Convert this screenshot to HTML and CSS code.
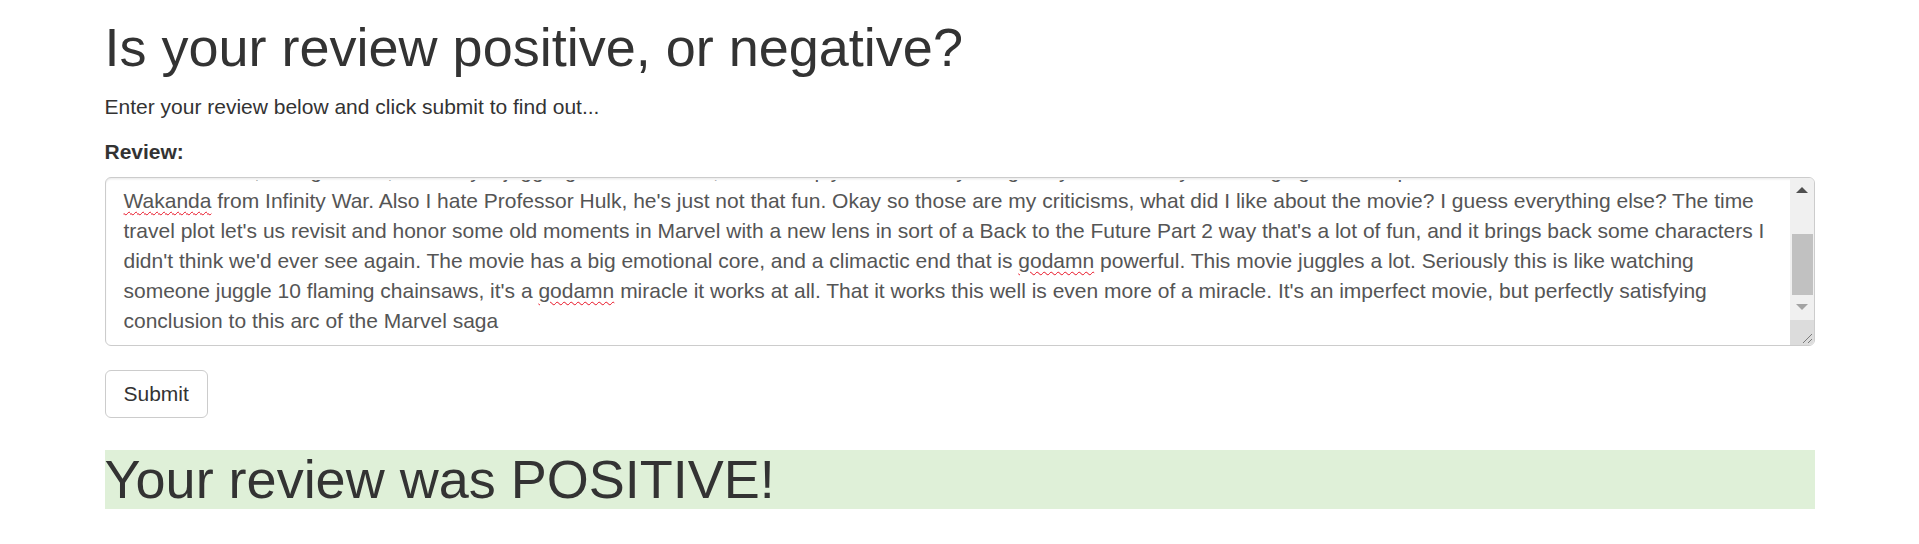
FILE: index.html
```html
<!DOCTYPE html>
<html lang="en">
<head>
<meta charset="utf-8">
<title>Review sentiment</title>
<link rel="stylesheet" href="styles.css">
</head>
<body>
<div class="container">
  <h1 class="title">Is your review positive, or negative?</h1>
  <p class="intro">Enter your review below and click submit to find out...</p>
  <form class="review-form">
    <label class="field-label">Review:</label>
    <div class="review-box">
      <div class="review-text">
        <div class="scrolled-line">
          <p>the final battle, as big as it is, is mostly a juggling act of cameos, and it simply doesn't carry the gravity or the clarity of the big fight on the plains of</p>
        </div>
        <p><span class="misspelled">Wakanda</span> from Infinity War. Also I hate Professor Hulk, he's just not that fun. Okay so those are my criticisms, what did I like about the movie? I guess everything else? The time travel plot let's us revisit and honor some old moments in Marvel with a new lens in sort of a Back to the Future Part 2 way that's a lot of fun, and it brings back some characters I didn't think we'd ever see again. The movie has a big emotional core, and a climactic end that is <span class="misspelled">godamn</span> powerful. This movie juggles a lot. Seriously this is like watching someone juggle 10 flaming chainsaws, it's a <span class="misspelled">godamn</span> miracle it works at all. That it works this well is even more of a miracle. It's an imperfect movie, but perfectly satisfying conclusion to this arc of the Marvel saga</p>
      </div>
      <div class="scrollbar">
        <div class="sb-btn">
          <svg width="12" height="6" viewBox="0 0 12 6"><path d="M0 6 L6 0 L12 6 Z" fill="#505050"/></svg>
        </div>
        <div class="sb-track"><div class="sb-thumb"></div></div>
        <div class="sb-btn">
          <svg width="12" height="6" viewBox="0 0 12 6"><path d="M0 0 L6 6 L12 0 Z" fill="#a3a3a3"/></svg>
        </div>
        <div class="sb-resizer">
          <svg width="24" height="25" viewBox="0 0 24 25"><path d="M22 14 L13 23 M22 19 L18 23" stroke="#7a7a7a" stroke-width="1" fill="none"/></svg>
        </div>
      </div>
    </div>
    <button type="button" class="submit-btn">Submit</button>
  </form>
  <h1 class="result">Your review was POSITIVE!</h1>
</div>
</body>
</html>
```

FILE: styles.css
```css
* {
  box-sizing: border-box;
}

body {
  margin: 0;
  font-family: "Liberation Sans", Arial, Helvetica, sans-serif;
  font-size: 21px;
  line-height: 30px;
  color: #333;
  background: #fff;
}

.container {
  width: 1710px;
  margin: 0 auto;
}

.title {
  font-size: 54px;
  line-height: 1.1;
  font-weight: 500;
  margin: 18px 0 15px;
}

.intro {
  margin: 0 0 15px;
}

.review-form {
  margin: 0;
}

.field-label {
  display: block;
  font-weight: 700;
  margin-bottom: 9.5px;
}

.review-box {
  display: flex;
  height: 169px;
  border: 1px solid #ccc;
  border-radius: 6px;
  overflow: hidden;
  background: #fff;
  box-shadow: inset 0 1.5px 1.5px rgba(0, 0, 0, 0.075);
}

.review-text {
  flex: 1;
  min-width: 0;
  display: flex;
  flex-direction: column;
  justify-content: flex-end;
  overflow: hidden;
  padding: 0 18px 9px;
  color: #555;
}

.review-text p {
  margin: 0;
  flex-shrink: 0;
}

.scrolled-line {
  height: 6.4px;
  flex-shrink: 0;
  overflow: hidden;
  display: flex;
  flex-direction: column;
  justify-content: flex-end;
}

.scrolled-line p {
  white-space: nowrap;
}

.misspelled {
  text-decoration: underline wavy #e81123;
  text-decoration-thickness: 1px;
  text-underline-offset: 3px;
}

.scrollbar {
  width: 24px;
  flex-shrink: 0;
  display: flex;
  flex-direction: column;
  background: #f0f0f0;
}

.sb-btn {
  height: 25px;
  display: flex;
  align-items: center;
  justify-content: center;
}

.sb-track {
  flex: 1;
  display: flex;
  flex-direction: column;
  justify-content: flex-end;
}

.sb-thumb {
  height: 61px;
  margin: 0 1px 0 2px;
  background: #c1c1c1;
}

.sb-resizer {
  height: 25px;
  background: #dcdcdc;
  display: flex;
}

.submit-btn {
  display: block;
  margin-top: 24px;
  font: inherit;
  line-height: 30px;
  color: #333;
  background: #fff;
  border: 1px solid #ccc;
  border-radius: 6px;
  padding: 8px 18px;
}

.result {
  margin: 32px 0 0;
  font-size: 54px;
  line-height: 1.1;
  font-weight: 500;
  background: #dff0d8;
}
```
